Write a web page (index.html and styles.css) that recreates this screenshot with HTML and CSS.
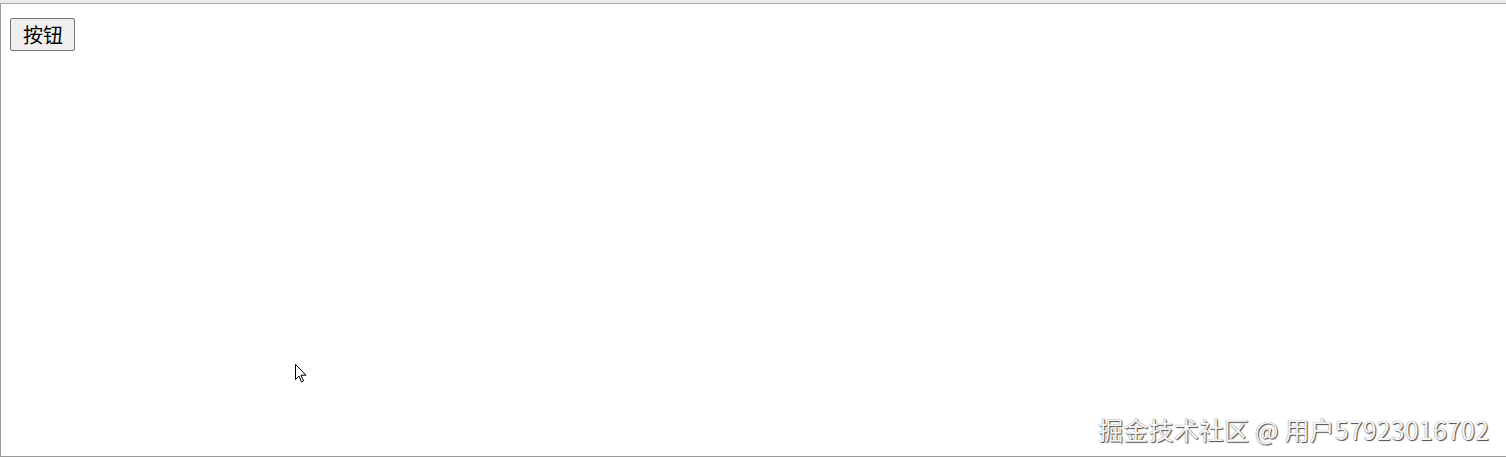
FILE: index.html
```html
<!DOCTYPE html>
<html lang="zh">
<head>
<meta charset="utf-8">
<title>按钮</title>
<link rel="stylesheet" href="styles.css">
</head>
<body>
<div class="topband"></div>
<div class="frame">
  <button class="btn">按钮</button>
  <svg class="cursor" width="12" height="20" viewBox="0 0 12 20" aria-hidden="true">
    <path d="M0.5 0.5 L0.5 15.5 L4 12 L6.5 18 L8.5 17 L6 11.2 L11 11.2 Z" fill="#fff" stroke="#000" stroke-width="1"/>
  </svg>
  <div class="watermark">掘金技术社区 @ 用户57923016702</div>
</div>
</body>
</html>
```

FILE: styles.css
```css
html, body {
  margin: 0;
  padding: 0;
  background: #fff;
  height: 457px;
  overflow: hidden;
}
.topband {
  height: 3px;
  background: #ebebeb;
}
.frame {
  position: relative;
  box-sizing: border-box;
  height: 454px;
  border-top: 1px solid #a9a9a9;
  border-left: 1px solid #9a9a9a;
  border-bottom: 1px solid #9a9a9a;
  padding: 14px 0 0 9px;
}
.btn {
  display: block;
  margin: 0;
  box-sizing: border-box;
  height: 33px;
  padding: 2px 11px 2px 12px;
  font-family: "Noto Sans CJK SC", "Microsoft YaHei", sans-serif;
  font-size: 20px;
  line-height: 27px;
  color: #000;
  background: #efefef;
  border: 1px solid #767676;
  border-radius: 2px;
}
.cursor {
  position: absolute;
  left: 294px;
  top: 360px;
}
.watermark {
  position: absolute;
  right: 17px;
  bottom: 11px;
  font-family: "Noto Sans CJK SC", "Noto Sans", sans-serif;
  font-size: 25px;
  line-height: 31px;
  letter-spacing: 0.15px;
  color: #f6f6f6;
  text-shadow: 1px 1px 1px #4a4a4a, 0 0 1px #777;
  white-space: nowrap;
}
```
